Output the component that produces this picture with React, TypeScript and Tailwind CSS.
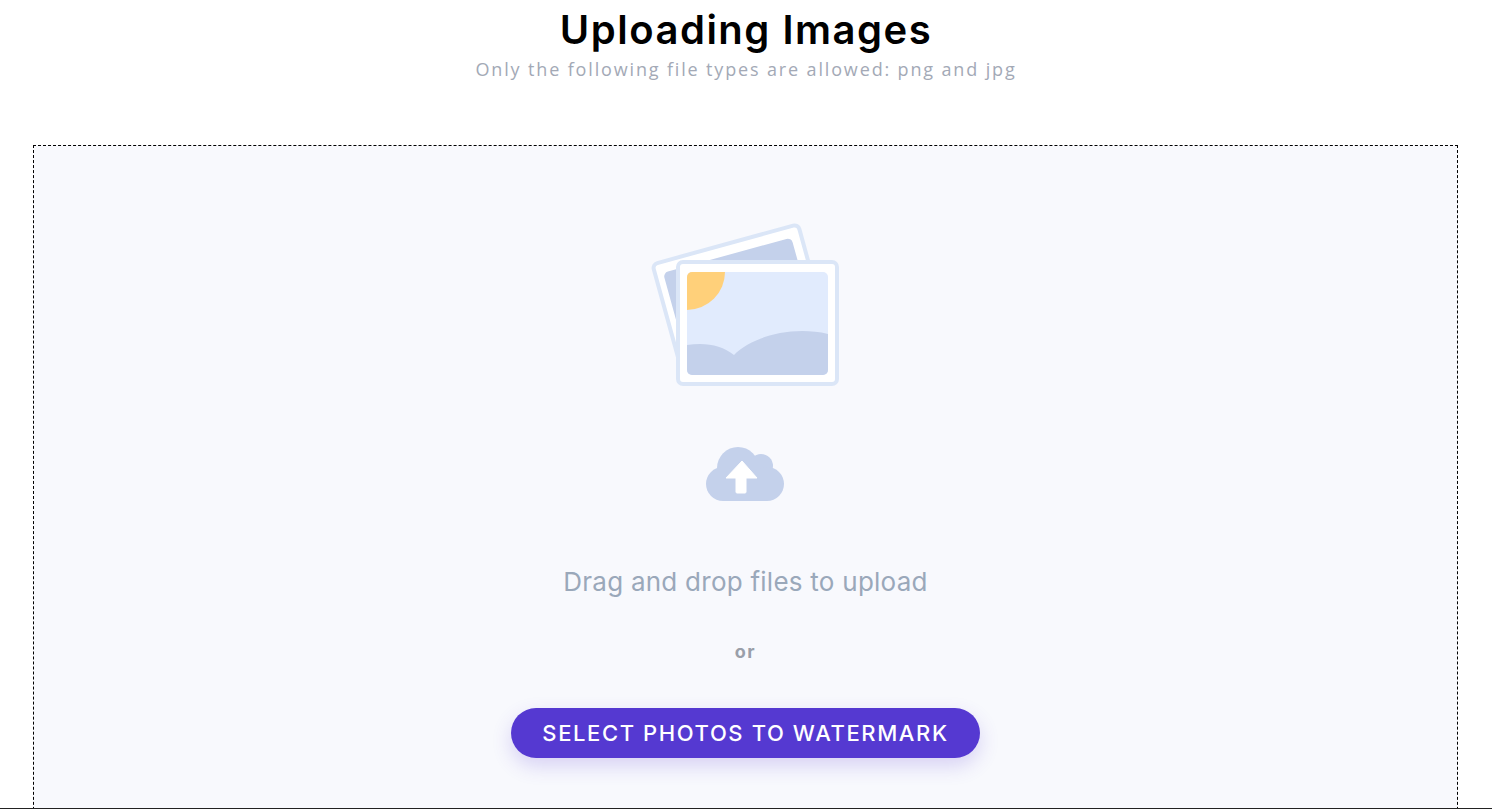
function PhotosIcon() {
    return (
        <svg width="190" height="165" viewBox="0 0 190 165" className="block blur-[0.4px]">
            <defs>
                <clipPath id="front-clip">
                    <rect x="37" y="50" width="141" height="103" rx="5" />
                </clipPath>
            </defs>
            <g transform="translate(0 41) rotate(-15.4)">
                <rect x="2" y="2" width="151" height="124" rx="5" fill="#ffffff" stroke="#dbe6f7" strokeWidth="4" />
                <rect x="10" y="13" width="133" height="103" rx="5" fill="#c4d1eb" />
            </g>
            <rect x="28" y="40" width="159" height="122" rx="5" fill="#ffffff" stroke="#dbe6f7" strokeWidth="4" />
            <g clipPath="url(#front-clip)">
                <rect x="37" y="50" width="141" height="103" fill="#e1ebfd" />
                <circle cx="37" cy="50" r="38" fill="#ffd07a" />
                <path d="M37 123 C55 120 72 123 84 133 C100 116 140 103 178 112 L178 153 L37 153 Z" fill="#c4d1eb" />
            </g>
        </svg>
    )
}

function CloudIcon() {
    return (
        <svg width="80" height="56" viewBox="0 0 80 56" className="block blur-[0.3px]">
            <g fill="#c4d1eb">
                <circle cx="33" cy="22" r="21" />
                <circle cx="56" cy="20" r="12" />
                <circle cx="18" cy="38" r="17" />
                <circle cx="62" cy="38" r="17" />
                <rect x="18" y="30" width="44" height="25" />
            </g>
            <path d="M37 15 L52 32 L41 32 L41 46 Q41 47 40 47 L32 47 Q31 47 31 46 L31 32 L21 32 Z" fill="#ffffff" stroke="#ffffff" strokeWidth="1" strokeLinejoin="round" />
        </svg>
    )
}

export default function App() {
    return (
        <div className="h-[809px] overflow-hidden bg-white border-b border-[#222222] font-['Inter',sans-serif]">
            <div className="text-center pt-[6px]">
                <h1 className="text-[40px] leading-[48px] font-semibold text-black tracking-[1.5px]">Uploading Images</h1>
                <p className="mt-[3px] text-[18px] leading-[24px] tracking-[1.85px] text-[#a3a9b6] font-['Open_Sans',sans-serif]">
                    Only the following file types are allowed: png and jpg
                </p>
            </div>

            <div className="mx-[33px] mt-[64px] h-[700px] w-[1425px] border border-dashed border-black bg-[#f8f9fd] flex flex-col items-center">
                <div className="mt-[76px] -ml-[2px]">
                    <PhotosIcon />
                </div>
                <div className="mt-[59px] -ml-[1px]">
                    <CloudIcon />
                </div>
                <p className="mt-[62px] text-[26px] leading-[36px] tracking-[0.25px] text-[#9aa8ba]">Drag and drop files to upload</p>
                <p className="mt-[40px] text-[18px] leading-[24px] font-bold tracking-[1.5px] text-[#9a9fa9]">or</p>
                <button className="mt-[44px] h-[50px] w-[469px] rounded-[25px] bg-[#5539d1] text-white text-[22px] font-medium tracking-[1.6px] shadow-[0_8px_20px_rgba(85,57,209,0.2)]">
                    SELECT PHOTOS TO WATERMARK
                </button>
            </div>
        </div>
    )
}
